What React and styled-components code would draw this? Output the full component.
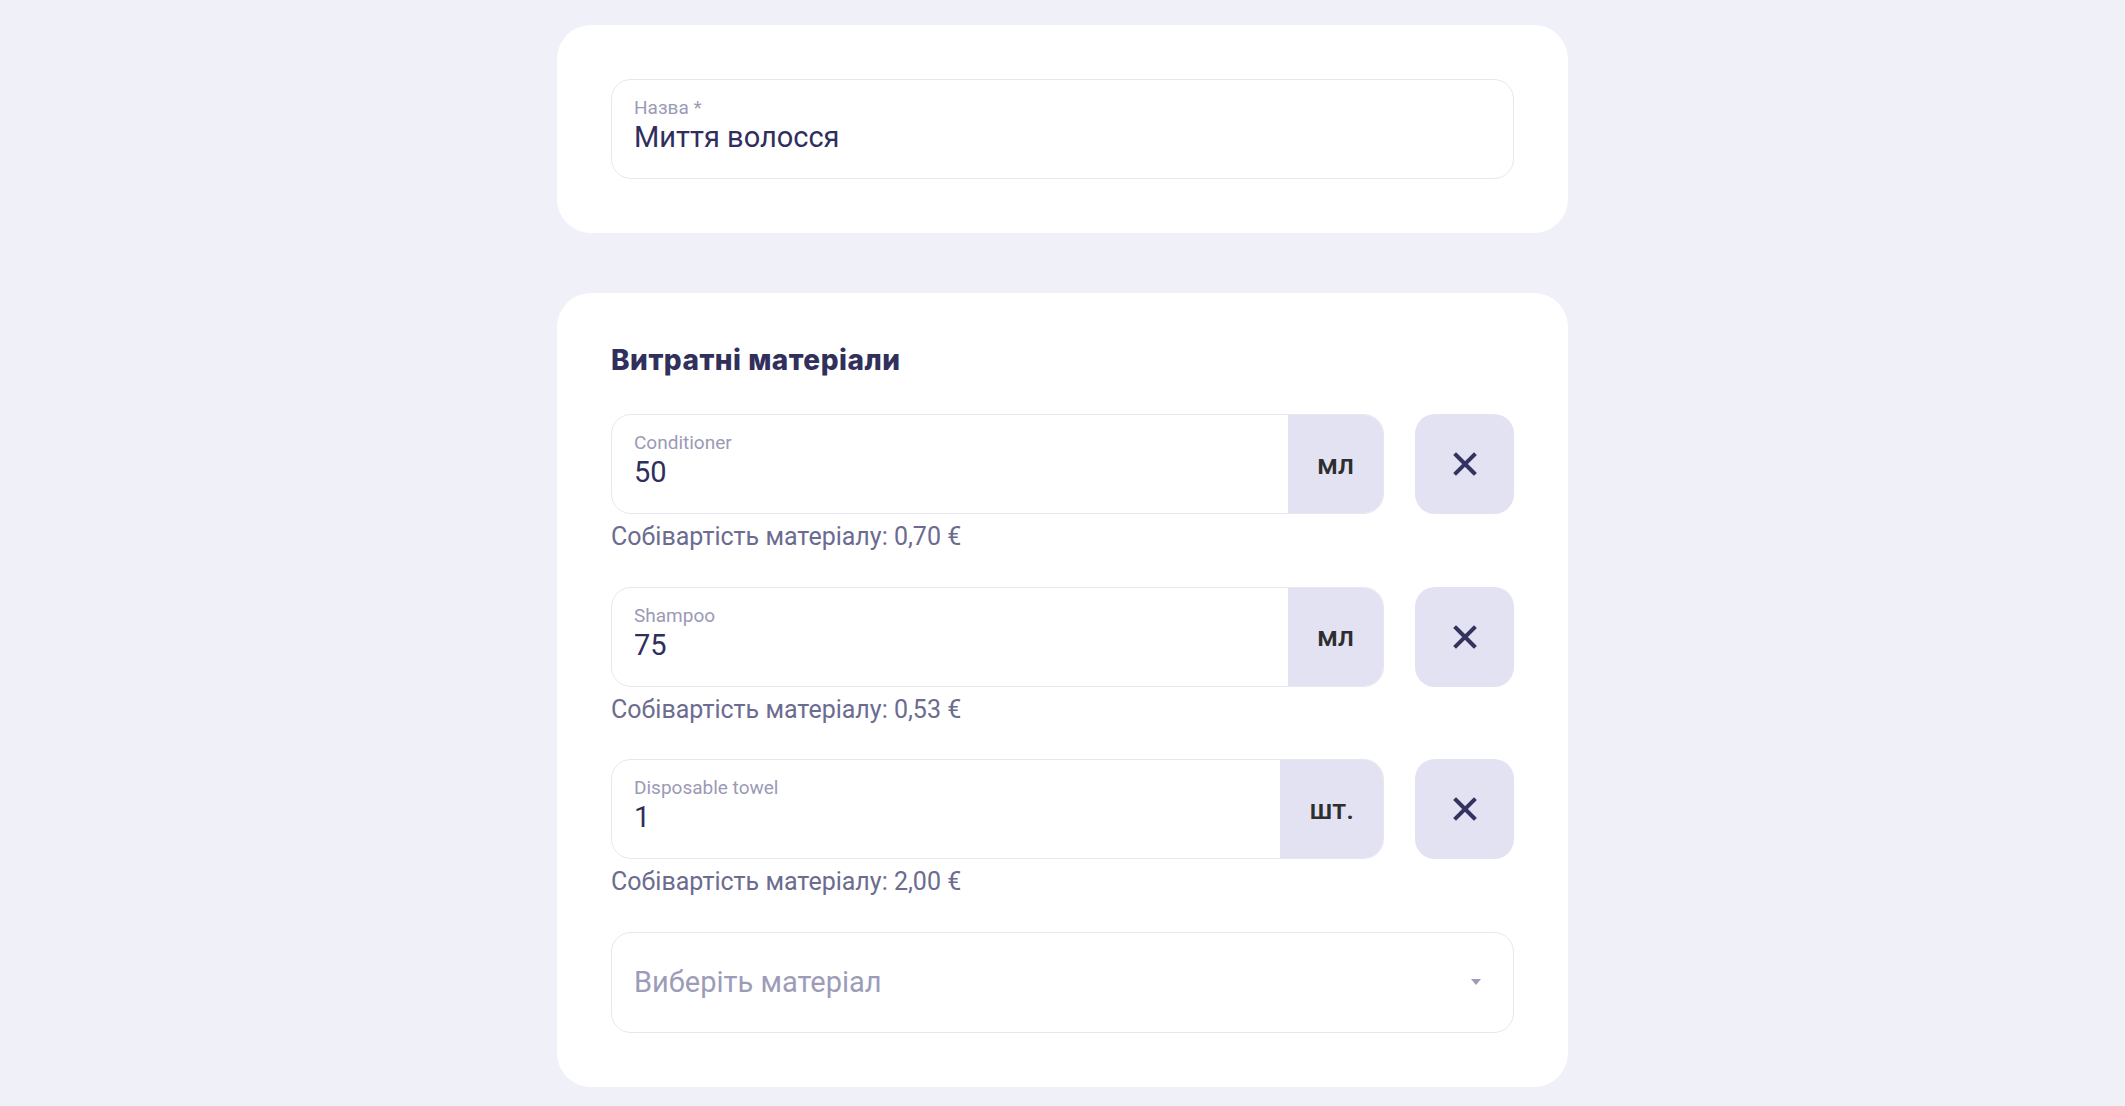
import styled, { createGlobalStyle } from "styled-components";

const GlobalStyle = createGlobalStyle`
  body {
    margin: 0;
    background: #f0f0f9;
    font-family: Roboto, "Liberation Sans", sans-serif;
  }
  * { box-sizing: border-box; }
`;

const Page = styled.div`
  display: flex;
  flex-direction: column;
  align-items: center;
  gap: 60px;
  padding: 25px 0 19px;
`;

const Card = styled.section`
  width: 1011px;
  background: #ffffff;
  border-radius: 34px;
  padding: 54px;
`;

const Title = styled.h2`
  margin: 0 0 41px;
  font-family: Inter, "Noto Sans", sans-serif;
  font-weight: 800;
  font-size: 28px;
  line-height: 26px;
  letter-spacing: 0.5px;
  color: #31305d;
`;

const Field = styled.div`
  display: flex;
  flex: 1;
  height: 100px;
  border: 1px solid #e7e7f0;
  border-radius: 20px;
  overflow: hidden;
  background: #fff;
`;

const FieldBody = styled.div`
  flex: 1;
  display: flex;
  flex-direction: column;
  padding: 17px 22px 0;
`;

const Label = styled.span`
  font-size: 19px;
  line-height: 22px;
  color: #9b9ab5;
`;

const Value = styled.span`
  font-size: 29px;
  line-height: 36px;
  color: #2f2e5c;
`;

const Unit = styled.div`
  display: flex;
  align-items: center;
  justify-content: center;
  padding: 0 29px;
  background: #e3e2f2;
  font-size: 28px;
  font-weight: 500;
  color: #2e2e30;
`;

const Row = styled.div`
  display: flex;
  gap: 31px;
`;

const DeleteButton = styled.button`
  width: 99px;
  height: 100px;
  flex: none;
  border: none;
  border-radius: 20px;
  background: #e3e2f2;
  display: flex;
  align-items: center;
  justify-content: center;
  cursor: pointer;
  padding: 0;
`;

const Material = styled.div`
  margin-bottom: 35.5px;
`;

const Cost = styled.div`
  margin-top: 9px;
  font-size: 25px;
  line-height: 28px;
  color: #6c6b90;
`;

const Select = styled.div`
  height: 101px;
  display: flex;
  align-items: center;
  justify-content: space-between;
  padding: 0 32px 0 22px;
  border: 1px solid #e7e7f0;
  border-radius: 20px;
`;

const Placeholder = styled.span`
  font-size: 29px;
  color: #9d9cb8;
`;

const Caret = styled.span`
  width: 0;
  height: 0;
  border-left: 5px solid transparent;
  border-right: 5px solid transparent;
  border-top: 6px solid #9d9cb8;
`;

const materials = [
  { name: "Conditioner", qty: "50", unit: "мл", cost: "0,70" },
  { name: "Shampoo", qty: "75", unit: "мл", cost: "0,53" },
  { name: "Disposable towel", qty: "1", unit: "шт.", cost: "2,00" },
];

function CloseIcon() {
  return (
    <svg width="24" height="24" viewBox="0 0 24 24">
      <path
        d="M3 3 L21 21 M21 3 L3 21"
        stroke="#34325f"
        strokeWidth="4"
        strokeLinecap="square"
        fill="none"
      />
    </svg>
  );
}

export default function App() {
  return (
    <>
      <GlobalStyle />
      <Page>
        <Card>
          <Field>
            <FieldBody>
              <Label>Назва *</Label>
              <Value>Миття волосся</Value>
            </FieldBody>
          </Field>
        </Card>
        <Card>
          <Title>Витратні матеріали</Title>
          {materials.map((m) => (
            <Material key={m.name}>
              <Row>
                <Field>
                  <FieldBody>
                    <Label>{m.name}</Label>
                    <Value>{m.qty}</Value>
                  </FieldBody>
                  <Unit>{m.unit}</Unit>
                </Field>
                <DeleteButton>
                  <CloseIcon />
                </DeleteButton>
              </Row>
              <Cost>Собівартість матеріалу: {m.cost} €</Cost>
            </Material>
          ))}
          <Select>
            <Placeholder>Виберіть матеріал</Placeholder>
            <Caret />
          </Select>
        </Card>
      </Page>
    </>
  );
}
